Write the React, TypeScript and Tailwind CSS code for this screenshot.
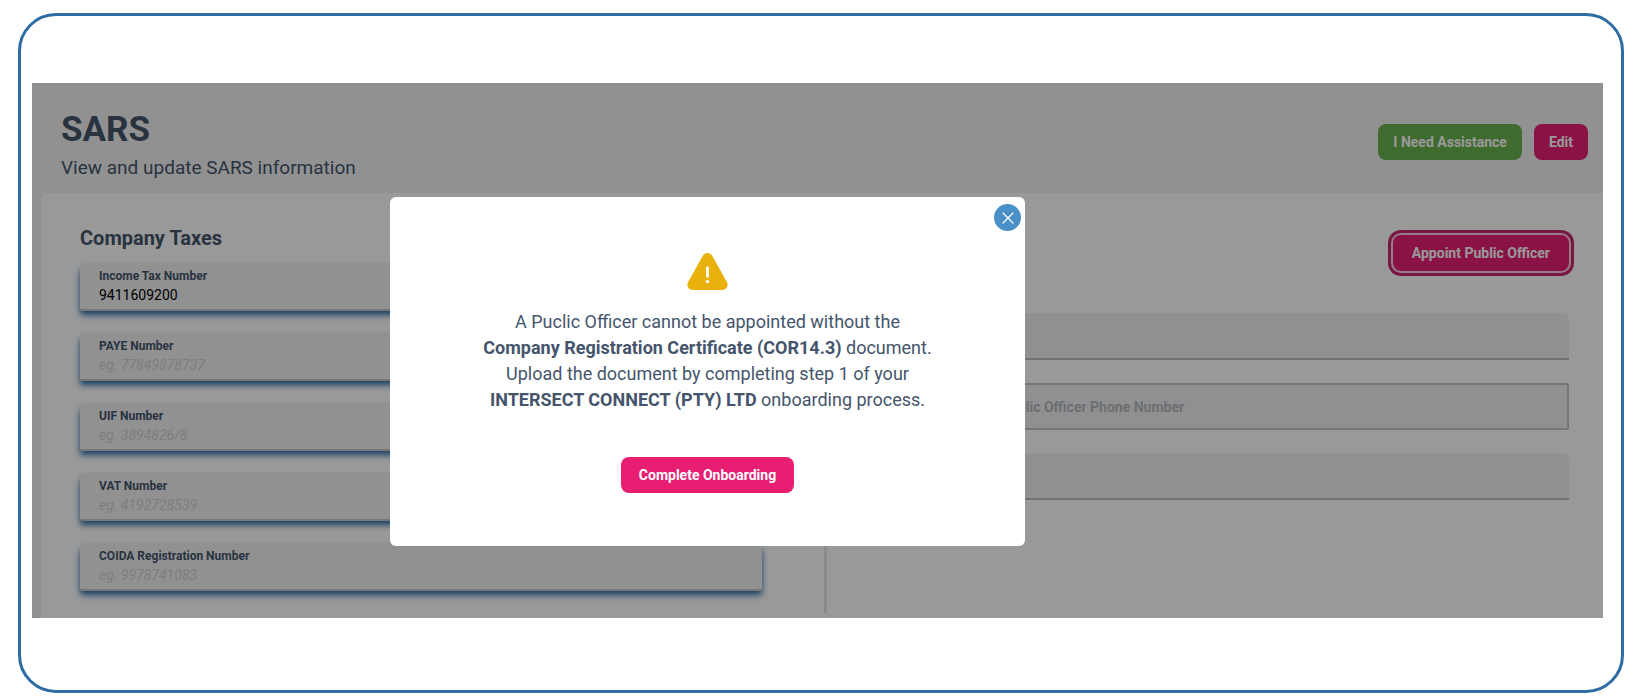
import { useId } from "react";

const taxFields = [
  { label: "Income Tax Number", value: "9411609200", hint: "" },
  { label: "PAYE Number", value: "", hint: "eg. 77849878737" },
  { label: "UIF Number", value: "", hint: "eg. 3894826/8" },
  { label: "VAT Number", value: "", hint: "eg. 4192728539" },
  { label: "COIDA Registration Number", value: "", hint: "eg. 9978741083" },
];

function TaxField({ label, value, hint }: { label: string; value: string; hint: string }) {
  const id = useId();
  return (
    <div className="flex h-[47px] flex-col rounded-t-md rounded-b-xs border-b-2 border-[#c9c9c9] bg-[#f2f2f2] px-[19px] pt-1 shadow-[0_4px_6px_#2a6ca6]">
      <label htmlFor={id} className="text-xs leading-[17px] font-bold">
        {label}
      </label>
      <input
        id={id}
        defaultValue={value}
        placeholder={hint}
        className="h-5 w-full bg-transparent text-sm text-black outline-none placeholder:text-[#d0d3d8] placeholder:italic"
      />
    </div>
  );
}

function Header() {
  return (
    <header className="flex h-[110px] items-center justify-between pt-2 pr-[15px] pl-[29px]">
      <div className="pt-1.5">
        <h1 className="text-[35px] leading-10 font-bold">SARS</h1>
        <p className="mt-1.5 text-[19px] leading-6">View and update SARS information</p>
      </div>
      <div className="flex gap-3">
        <button className="h-9 rounded-lg bg-[#6bb24e] px-[15px] text-sm font-bold text-white">
          I Need Assistance
        </button>
        <button className="h-9 rounded-lg bg-[#e81e73] px-[15px] text-sm font-bold text-white">Edit</button>
      </div>
    </header>
  );
}

function OfficerForm() {
  return (
    <section className="flex flex-1 flex-col pr-[34px] pl-[62px]">
      <div className="flex h-[78px] items-start justify-end">
        <button className="h-9 rounded-lg bg-[#e81e73] px-[19px] text-sm font-bold text-white ring-3 ring-[#c9286d] ring-offset-2 ring-offset-[#fbd0e2]">
          Appoint Public Officer
        </button>
      </div>
      <div className="flex flex-col gap-[23px]">
        <input aria-label="Public Officer Name" className="h-[47px] w-full rounded-t-md border-b-2 border-[#bfbfbf] bg-[#f2f2f2]" />
        <input
          aria-label="Public Officer Phone Number"
          placeholder="Public Officer Phone Number"
          className="h-[47px] w-full rounded-xs border-2 border-[#c4c4c4] bg-[#f0f0f0] pl-[110px] text-sm font-bold placeholder:text-[#b3b9c2]"
        />
        <input aria-label="Public Officer Email" className="h-[47px] w-full rounded-t-md border-b-2 border-[#bfbfbf] bg-[#f2f2f2]" />
      </div>
    </section>
  );
}

function Dialog() {
  return (
    <div
      role="dialog"
      aria-modal="true"
      aria-label="Company registration required"
      className="absolute top-[114px] left-[358px] flex h-[349px] w-[635px] flex-col items-center rounded-md bg-white pt-14"
    >
      <button
        aria-label="Close"
        className="absolute top-[7px] right-1 flex size-[27px] items-center justify-center rounded-full bg-[#4a90c8] text-white"
      >
        <svg viewBox="0 0 12 12" className="size-3" fill="none" stroke="currentColor" strokeWidth="1.2" strokeLinecap="round">
          <path d="M1 1 11 11M11 1 1 11" />
        </svg>
      </button>
      <svg viewBox="0 0 41 37" className="h-[37px] w-[41px]">
        <path
          d="M15.8 2.7a5.5 5.5 0 0 1 9.4 0L40 29.3a5.2 5.2 0 0 1-4.6 7.7H5.6a5.2 5.2 0 0 1-4.6-7.7Z"
          fill="#e8b10e"
        />
        <path d="M20.5 14.8v8.6" stroke="#fff" strokeWidth="2.8" strokeLinecap="round" />
        <circle cx="20.5" cy="28.6" r="1.7" fill="#fff" />
      </svg>
      <p className="mt-[19px] text-center text-lg leading-[26px]">
        A Puclic Officer cannot be appointed without the
        <br />
        <strong>Company Registration Certificate (COR14.3)</strong> document.
        <br />
        Upload the document by completing step 1 of your
        <br />
        <strong>INTERSECT CONNECT (PTY) LTD</strong> onboarding process.
      </p>
      <button className="mt-11 h-9 rounded-lg bg-[#e81e73] px-[18px] text-sm font-bold text-white">
        Complete Onboarding
      </button>
    </div>
  );
}

export default function App() {
  return (
    <div className="bg-white pt-[13px] pr-4 pb-[7px] pl-[18px] font-['Roboto',sans-serif] text-slate-600">
      <div className="rounded-[38px] border-3 border-[#2e6da4] pt-[67px] pr-[18px] pb-[72px] pl-[11px]">
        <div className="relative bg-[#f2f2f2]">
          <Header />
          <main className="ml-[9px] flex h-[425px] rounded-tl-lg bg-white pt-[42px]">
            <section className="w-[721px] pl-[39px]">
              <h2 className="-mt-3 h-[41px] pt-px text-xl leading-7 font-bold">Company Taxes</h2>
              <div className="flex flex-col gap-[23px]">
                {taxFields.map((f) => (
                  <TaxField key={f.label} {...f} />
                ))}
              </div>
            </section>
            <div className="mb-[5px] ml-[62px] w-[3px] bg-gray-200" />
            <OfficerForm />
          </main>
          <div className="absolute inset-0 bg-black/40" />
          <Dialog />
        </div>
      </div>
    </div>
  );
}
